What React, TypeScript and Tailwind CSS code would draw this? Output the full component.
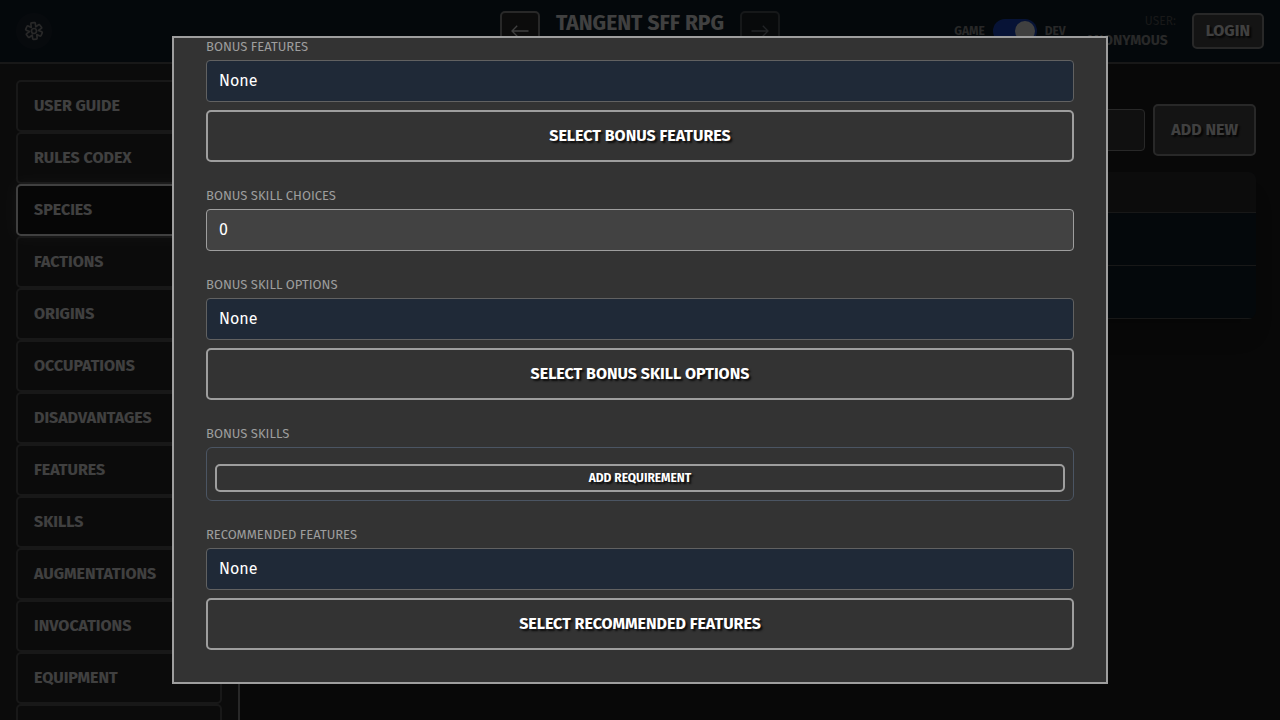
const sections = [
  "User Guide",
  "Rules Codex",
  "Species",
  "Factions",
  "Origins",
  "Occupations",
  "Disadvantages",
  "Features",
  "Skills",
  "Augmentations",
  "Invocations",
  "Equipment",
  "",
];

const buttonBase =
  "rounded-[5px] border-2 border-[#9e9e9e] font-bold uppercase [text-shadow:2px_2px_2px_rgba(0,0,0,0.8)]";

function GearIcon() {
  return (
    <svg viewBox="0 0 24 24" className="size-5" fill="none" stroke="currentColor" strokeWidth="2" strokeLinejoin="round" aria-hidden="true">
      <g transform="rotate(-7 12 12)">
        <path d="M10.3 2h3.400a1 1 0 0 1 1 1v4.300l3.700-2.100a1 1 0 0 1 1.400.4l1.700 2.900a1 1 0 0 1-.4 1.400L17.400 12l3.700 2.100a1 1 0 0 1 .4 1.400l-1.700 2.900a1 1 0 0 1-1.400.4l-3.700-2.100V21a1 1 0 0 1-1 1h-3.400a1 1 0 0 1-1-1v-4.300l-3.700 2.100a1 1 0 0 1-1.400-.4l-1.700-2.900a1 1 0 0 1 .4-1.400L6.600 12 2.900 9.900a1 1 0 0 1-.4-1.400l1.700-2.900a1 1 0 0 1 1.400-.4l3.700 2.100V3a1 1 0 0 1 1-1z" />
        <circle cx="12" cy="12" r="3" />
      </g>
    </svg>
  );
}

function Arrow({ forward = false }: { forward?: boolean }) {
  return (
    <svg viewBox="0 0 20 20" className="size-5" fill="none" stroke="currentColor" strokeWidth="1.3" aria-hidden="true">
      <path d={forward ? "M1.5 10H18M12.8 4.800 18 10l-5.200 5.200" : "M18.5 10H2M7.200 4.800 2 10l5.200 5.200"} />
    </svg>
  );
}

function Picker({ label, action }: { label: string; action: string }) {
  return (
    <section className="flex shrink-0 flex-col">
      <h3 className="mb-1 text-[13px] leading-[19px] text-[#9e9e9e] uppercase">{label}</h3>
      <div className="mb-2 rounded-[4px] border border-[#616161] bg-[#1f2937] px-3 py-2">None</div>
      <button type="button" className={`${buttonBase} bg-[#333333] px-4 py-3`}>
        {action}
      </button>
    </section>
  );
}

function Header() {
  return (
    <header className="grid h-16 shrink-0 grid-cols-[1fr_auto_1fr] items-center border-b-2 border-[#616161] bg-[#10202c] px-4">
      <button type="button" aria-label="Settings" className="flex size-9 items-center justify-center rounded-full bg-[#1f2937] text-[#9e9e9e]">
        <GearIcon />
      </button>
      <div className="flex items-center gap-4">
        <button type="button" aria-label="Back" className="flex size-10 items-center justify-center rounded-[5px] border-2 border-[#9e9e9e] bg-[#333333]">
          <Arrow />
        </button>
        <div className="flex h-12 items-start">
          <h1 className="text-[21px] leading-8 font-bold">TANGENT SFF RPG</h1>
        </div>
        <button type="button" disabled aria-label="Forward" className="flex size-10 items-center justify-center rounded-[5px] border-2 border-[#9e9e9e] bg-[#333333] opacity-50">
          <Arrow forward />
        </button>
      </div>
      <div className="flex items-center justify-end gap-4">
        <div className="flex items-center gap-2 text-xs font-bold text-[#9e9e9e]">
          <span>GAME</span>
          <button type="button" role="switch" aria-checked="true" aria-label="Developer mode" className="flex h-6 w-11 items-center justify-end rounded-full bg-[#1d4ed8] px-0.5">
            <span className="size-5 rounded-full bg-white" />
          </button>
          <span>DEV</span>
        </div>
        <div className="flex flex-col items-end text-[#9e9e9e]">
          <span className="text-xs leading-5 text-[#616161]">USER:</span>
          <span className="pr-2 pl-1 text-sm leading-5 font-bold">ANONYMOUS</span>
        </div>
        <button type="button" className={`${buttonBase} bg-[#505050] px-3 py-1`}>
          Login
        </button>
      </div>
    </header>
  );
}

export default function App() {
  return (
    <div className="flex h-screen flex-col overflow-hidden bg-[#202020] font-['Trebuchet_MS','Fira_Sans','Noto_Sans',sans-serif] text-base text-white">
      <Header />
      <div className="flex min-h-0 flex-1">
        <aside className="w-60 shrink-0 overflow-hidden border-r-2 border-[#9e9e9e] bg-[#2c2c2c] p-4">
          <nav className="flex flex-col">
            {sections.map((name) => (
              <a
                key={name || "more"}
                href="#"
                aria-label={name || "More"}
                className={
                  name === "Species"
                    ? "h-13 rounded-[5px] border-2 border-white bg-[#181818] px-4 py-3 font-bold uppercase shadow-[0_0_15px_rgba(255,255,255,0.2)]"
                    : "h-13 rounded-[5px] border-2 border-[#616161] px-4 py-3 font-bold uppercase"
                }
              >
                {name}
              </a>
            ))}
          </nav>
        </aside>
        <main className="min-w-0 flex-1 px-6 py-10">
          <div className="flex items-center gap-2">
            <input type="search" aria-label="Search species" className="h-[42px] min-w-0 flex-1 rounded-[4px] border border-[#9e9e9e] bg-[#424242] px-3" />
            <button type="button" className={`${buttonBase} bg-[#505050] px-4 py-3`}>
              Add New
            </button>
          </div>
          <div className="mt-4 overflow-hidden rounded-lg shadow-xl">
            <table className="w-full border-collapse bg-[#10202c]" aria-label="Species">
              <thead className="bg-[#333333]">
                <tr className="h-10 border-b border-[#616161]"><th /></tr>
              </thead>
              <tbody>
                <tr className="h-[53px] border-b border-[#616161]"><td /></tr>
                <tr className="h-[53px] border-b border-[#616161]"><td /></tr>
              </tbody>
            </table>
          </div>
        </main>
      </div>

      <div className="fixed inset-0 flex items-center justify-center bg-black/75 px-4">
        <div role="dialog" aria-modal="true" aria-label="Edit species" className="flex h-[90vh] w-full max-w-[936px] flex-col justify-end gap-6 overflow-hidden border-2 border-[#9e9e9e] bg-[#333333] p-8">
          <Picker label="Bonus Features" action="Select Bonus Features" />
          <div className="flex shrink-0 flex-col">
            <label htmlFor="skill-choices" className="mb-1 text-[13px] leading-[19px] text-[#9e9e9e] uppercase">Bonus Skill Choices</label>
            <input id="skill-choices" defaultValue="0" className="rounded-[4px] border border-[#9e9e9e] bg-[#424242] px-3 py-2" />
          </div>
          <Picker label="Bonus Skill Options" action="Select Bonus Skill Options" />
          <section className="flex shrink-0 flex-col">
            <h3 className="mb-1 text-[13px] leading-[19px] text-[#9e9e9e] uppercase">Bonus Skills</h3>
            <div className="flex flex-col rounded-md border border-[#4b5563] px-2 pt-4 pb-2">
              <button type="button" className={`${buttonBase} px-2 py-1 text-xs`}>
                Add Requirement
              </button>
            </div>
          </section>
          <Picker label="Recommended Features" action="Select Recommended Features" />
        </div>
      </div>
    </div>
  );
}
